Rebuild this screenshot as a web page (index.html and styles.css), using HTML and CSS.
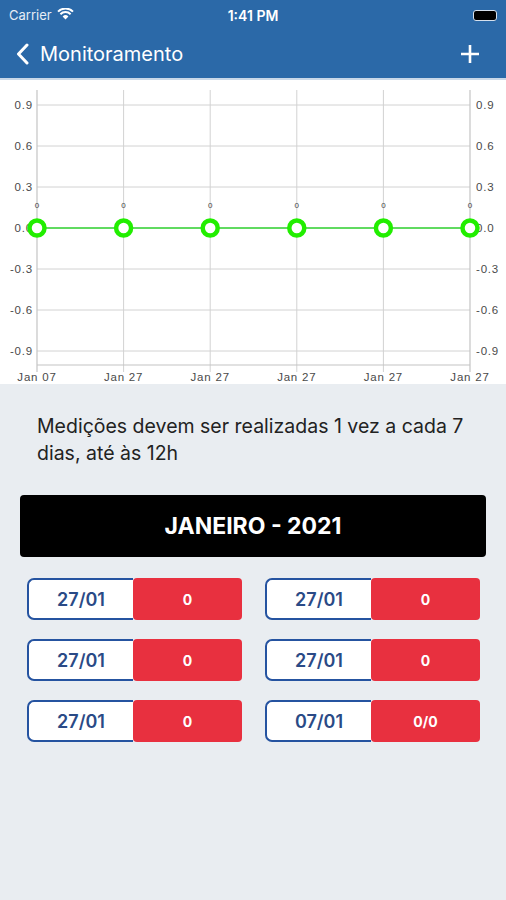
FILE: index.html
```html
<!DOCTYPE html>
<html lang="pt">
<head>
    <meta charset="UTF-8">
    <meta name="viewport" content="width=device-width, initial-scale=1.0">
    <title>Monitoramento</title>
    <link rel="stylesheet" href="styles.css">
</head>
<body>
    <div class="top">
        <div class="status">
            <span class="carrier">Carrier
                <svg class="wifi" width="17" height="12" viewBox="0 0 17 12">
                    <path d="M8.5 11.5 L5.6 8.4 A4.2 4.2 0 0 1 11.4 8.4 Z" fill="#fff"/>
                    <path d="M3.4 6.2 A7.3 7.3 0 0 1 13.6 6.2" stroke="#fff" stroke-width="2" fill="none"/>
                    <path d="M1 3.6 A10.8 10.8 0 0 1 16 3.6" stroke="#fff" stroke-width="2" fill="none"/>
                </svg>
            </span>
            <span class="clock">1:41 PM</span>
            <span class="battery"><i></i></span>
        </div>
        <div class="nav">
            <span class="back">
                <svg width="14" height="22" viewBox="0 0 14 22">
                    <path d="M11 2 L2.5 11 L11 20" stroke="#fff" stroke-width="3" fill="none" stroke-linecap="round" stroke-linejoin="round"/>
                </svg>
                Monitoramento
            </span>
            <svg class="plus" width="20" height="20" viewBox="0 0 20 20">
                <path d="M10 1 V19 M1 10 H19" stroke="#fff" stroke-width="2.6"/>
            </svg>
        </div>
    </div>

    <div class="chart">
        <svg width="506" height="304" viewBox="0 0 506 304">
            <g stroke="#d2d2d2" stroke-width="1">
                <line x1="37" y1="25" x2="470" y2="25"/>
                <line x1="37" y1="66" x2="470" y2="66"/>
                <line x1="37" y1="107" x2="470" y2="107"/>
                <line x1="37" y1="148" x2="470" y2="148"/>
                <line x1="37" y1="189" x2="470" y2="189"/>
                <line x1="37" y1="230" x2="470" y2="230"/>
                <line x1="37" y1="271" x2="470" y2="271"/>
                <line x1="123.6" y1="10" x2="123.6" y2="292"/>
                <line x1="210.2" y1="10" x2="210.2" y2="292"/>
                <line x1="296.8" y1="10" x2="296.8" y2="292"/>
                <line x1="383.4" y1="10" x2="383.4" y2="292"/>
            </g>
            <g stroke="#c4c4c4" stroke-width="1.2">
                <line x1="37" y1="10" x2="37" y2="292"/>
                <line x1="470" y1="10" x2="470" y2="292"/>
                <line x1="37" y1="285" x2="470" y2="285"/>
            </g>
            <g class="ax" text-anchor="end">
                <text x="33" y="29">0.9</text>
                <text x="33" y="70">0.6</text>
                <text x="33" y="111">0.3</text>
                <text x="33" y="152">0.0</text>
                <text x="33" y="193">-0.3</text>
                <text x="33" y="234">-0.6</text>
                <text x="33" y="275">-0.9</text>
            </g>
            <g class="ax">
                <text x="476" y="29">0.9</text>
                <text x="476" y="70">0.6</text>
                <text x="476" y="111">0.3</text>
                <text x="476" y="152">0.0</text>
                <text x="476" y="193">-0.3</text>
                <text x="476" y="234">-0.6</text>
                <text x="476" y="275">-0.9</text>
            </g>
            <g class="ax" text-anchor="middle">
                <text x="37" y="301">Jan 07</text>
                <text x="123.6" y="301">Jan 27</text>
                <text x="210.2" y="301">Jan 27</text>
                <text x="296.8" y="301">Jan 27</text>
                <text x="383.4" y="301">Jan 27</text>
                <text x="470" y="301">Jan 27</text>
            </g>
            <line x1="37" y1="148" x2="470" y2="148" stroke="#33d633" stroke-width="1.6"/>
            <g class="pt" text-anchor="middle">
                <text x="37" y="128">0</text>
                <text x="123.6" y="128">0</text>
                <text x="210.2" y="128">0</text>
                <text x="296.8" y="128">0</text>
                <text x="383.4" y="128">0</text>
                <text x="470" y="128">0</text>
            </g>
            <g fill="#fff" stroke="#22ee00" stroke-width="4.5">
                <circle cx="37" cy="148" r="7.5"/>
                <circle cx="123.6" cy="148" r="7.5"/>
                <circle cx="210.2" cy="148" r="7.5"/>
                <circle cx="296.8" cy="148" r="7.5"/>
                <circle cx="383.4" cy="148" r="7.5"/>
                <circle cx="470" cy="148" r="7.5"/>
            </g>
        </svg>
    </div>

    <div class="content">
        <p class="info">Medições devem ser realizadas 1 vez a cada 7 dias, até às 12h</p>
        <div class="month">JANEIRO - 2021</div>
        <div class="grid">
            <div class="item"><span class="date">27/01</span><span class="val">0</span></div>
            <div class="item"><span class="date">27/01</span><span class="val">0</span></div>
            <div class="item"><span class="date">27/01</span><span class="val">0</span></div>
            <div class="item"><span class="date">27/01</span><span class="val">0</span></div>
            <div class="item"><span class="date">27/01</span><span class="val">0</span></div>
            <div class="item"><span class="date">07/01</span><span class="val">0/0</span></div>
        </div>
    </div>
</body>
</html>
```

FILE: styles.css
```css
body,p,div {margin: 0; padding: 0;}
body {
    font-family: Inter, "Liberation Sans", sans-serif;
    background: #e9edf1;
    width: 506px;
    min-height: 900px;
}
.top {
    background: #2b69a8;
    color: #fff;
    border-bottom: 2px solid #c9d8e8;
}
.status {
    height: 30px;
    display: flex;
    align-items: center;
    justify-content: space-between;
    padding: 0 9px 0 9px;
    font-size: 13px;
}
.carrier {
    width: 90px;
    display: flex;
    align-items: center;
    gap: 5px;
    color: #e6edf5;
}
.wifi {margin-top: -2px;}
.clock {
    font-weight: 600;
    font-size: 14px;
}
.battery {
    width: 90px;
    display: flex;
    justify-content: flex-end;
}
.battery i {
    width: 22px;
    height: 9px;
    background: #000;
    border-radius: 3px;
    border: 1px solid #d6e1ee;
}
.nav {
    height: 48px;
    display: flex;
    align-items: center;
    justify-content: space-between;
    padding: 0 26px 0 16px;
}
.back {
    display: flex;
    align-items: center;
    gap: 10px;
    font-size: 20px;
}
.chart {
    background: #fff;
    height: 304px;
}
.chart svg {display: block;}
.ax {
    font-family: "Liberation Sans", sans-serif;
    font-size: 11.5px;
    letter-spacing: 0.8px;
    fill: #4a4a4a;
}
.pt {
    font-family: "Liberation Sans", sans-serif;
    font-size: 8px;
    fill: #444;
}
.content {
    padding: 29px 20px 0 20px;
}
.info {
    font-size: 19.5px;
    line-height: 27px;
    color: #222;
    padding: 0 10px 0 17px;
}
.month {
    margin-top: 28px;
    height: 62px;
    background: #000;
    border-radius: 4px;
    color: #fff;
    font-size: 23px;
    font-weight: 700;
    display: flex;
    align-items: center;
    justify-content: center;
}
.grid {
    margin-top: 21px;
    display: grid;
    grid-template-columns: 215px 215px;
    justify-content: space-between;
    row-gap: 19px;
    padding: 0 6px 0 7px;
}
.item {
    height: 42px;
    display: flex;
}
.date {
    box-sizing: border-box;
    width: 106px;
    background: #fff;
    border: 2px solid #2553a0;
    border-right: none;
    border-radius: 7px 0 0 7px;
    color: #2a4a86;
    font-size: 18px;
    font-weight: 600;
    display: flex;
    align-items: center;
    justify-content: center;
}
.val {
    flex: 1;
    background: #e8303f;
    border-radius: 4px;
    color: #fff;
    font-size: 14px;
    font-weight: 700;
    display: flex;
    align-items: center;
    justify-content: center;
}
```
